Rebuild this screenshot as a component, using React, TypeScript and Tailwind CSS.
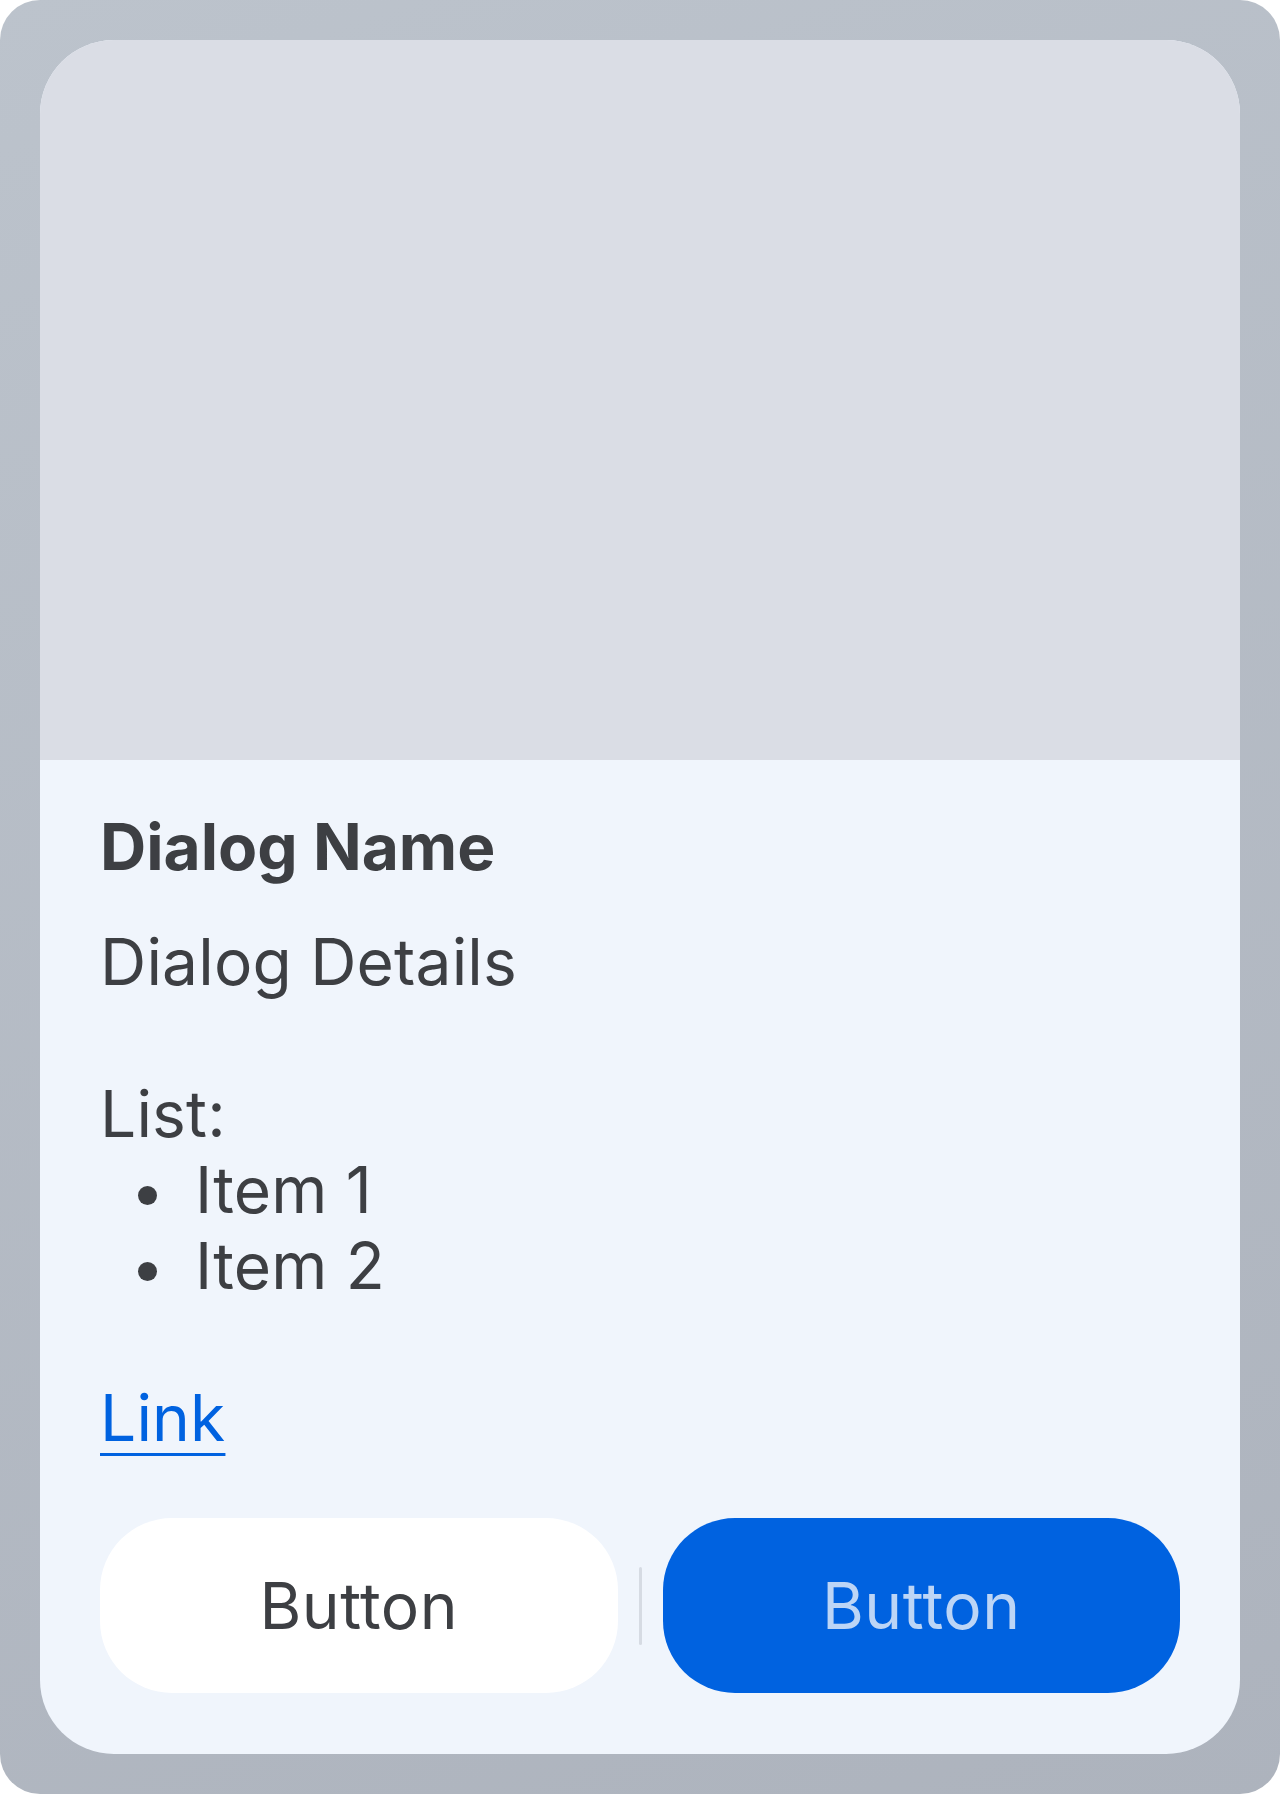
import React from 'react';

export default function App() {
    const items = ['Item 1', 'Item 2'];

    return (
        <div className="w-[1280px] h-[1794px] bg-white font-['Inter',sans-serif]">
            {/* Backdrop frame */}
            <div className="w-full h-full rounded-[40px] bg-[linear-gradient(160deg,#bcc3cc,#adb3bd)] p-[40px] flex">
                {/* Dialog card */}
                <div className="flex-1 flex flex-col rounded-[74px] overflow-hidden bg-[#f0f5fc]">
                    {/* Media placeholder */}
                    <div className="h-[720px] shrink-0 bg-[#dadde5]" />

                    {/* Body */}
                    <div className="flex-1 flex flex-col px-[60px] pt-[49px] pb-[60px] text-[#3d3f43]">
                        <h2 className="text-[64px] leading-[76px] font-bold">Dialog Name</h2>

                        <div className="mt-[39px] text-[64px] leading-[76px] tracking-[0.2px]">
                            <p>Dialog Details</p>
                            <p className="h-[76px]" />
                            <p>List:</p>
                            <ul>
                                {items.map((item) => (
                                    <li key={item} className="flex items-start">
                                        <span className="w-[19px] h-[19px] rounded-full bg-[#3d3f43] ml-[38px] mt-[34px] shrink-0" />
                                        <span className="ml-[38px]">{item}</span>
                                    </li>
                                ))}
                            </ul>
                            <p className="h-[76px]" />
                            <a href="#" className="text-[#0062e0] underline decoration-[3px] underline-offset-[12px]">
                                Link
                            </a>
                        </div>

                        {/* Actions */}
                        <div className="mt-[62px] flex items-center">
                            <button className="flex-1 h-[175px] rounded-[72px] bg-white text-[64px] tracking-[0.5px] text-[#3d3f43]">
                                Button
                            </button>
                            <div className="mx-[21px] w-[3px] h-[78px] rounded-full bg-[#d6dbe3]" />
                            <button className="flex-1 h-[175px] rounded-[72px] bg-[#0062e0] text-[64px] tracking-[0.5px] text-[#bcd5f6]">
                                Button
                            </button>
                        </div>
                    </div>
                </div>
            </div>
        </div>
    );
}
